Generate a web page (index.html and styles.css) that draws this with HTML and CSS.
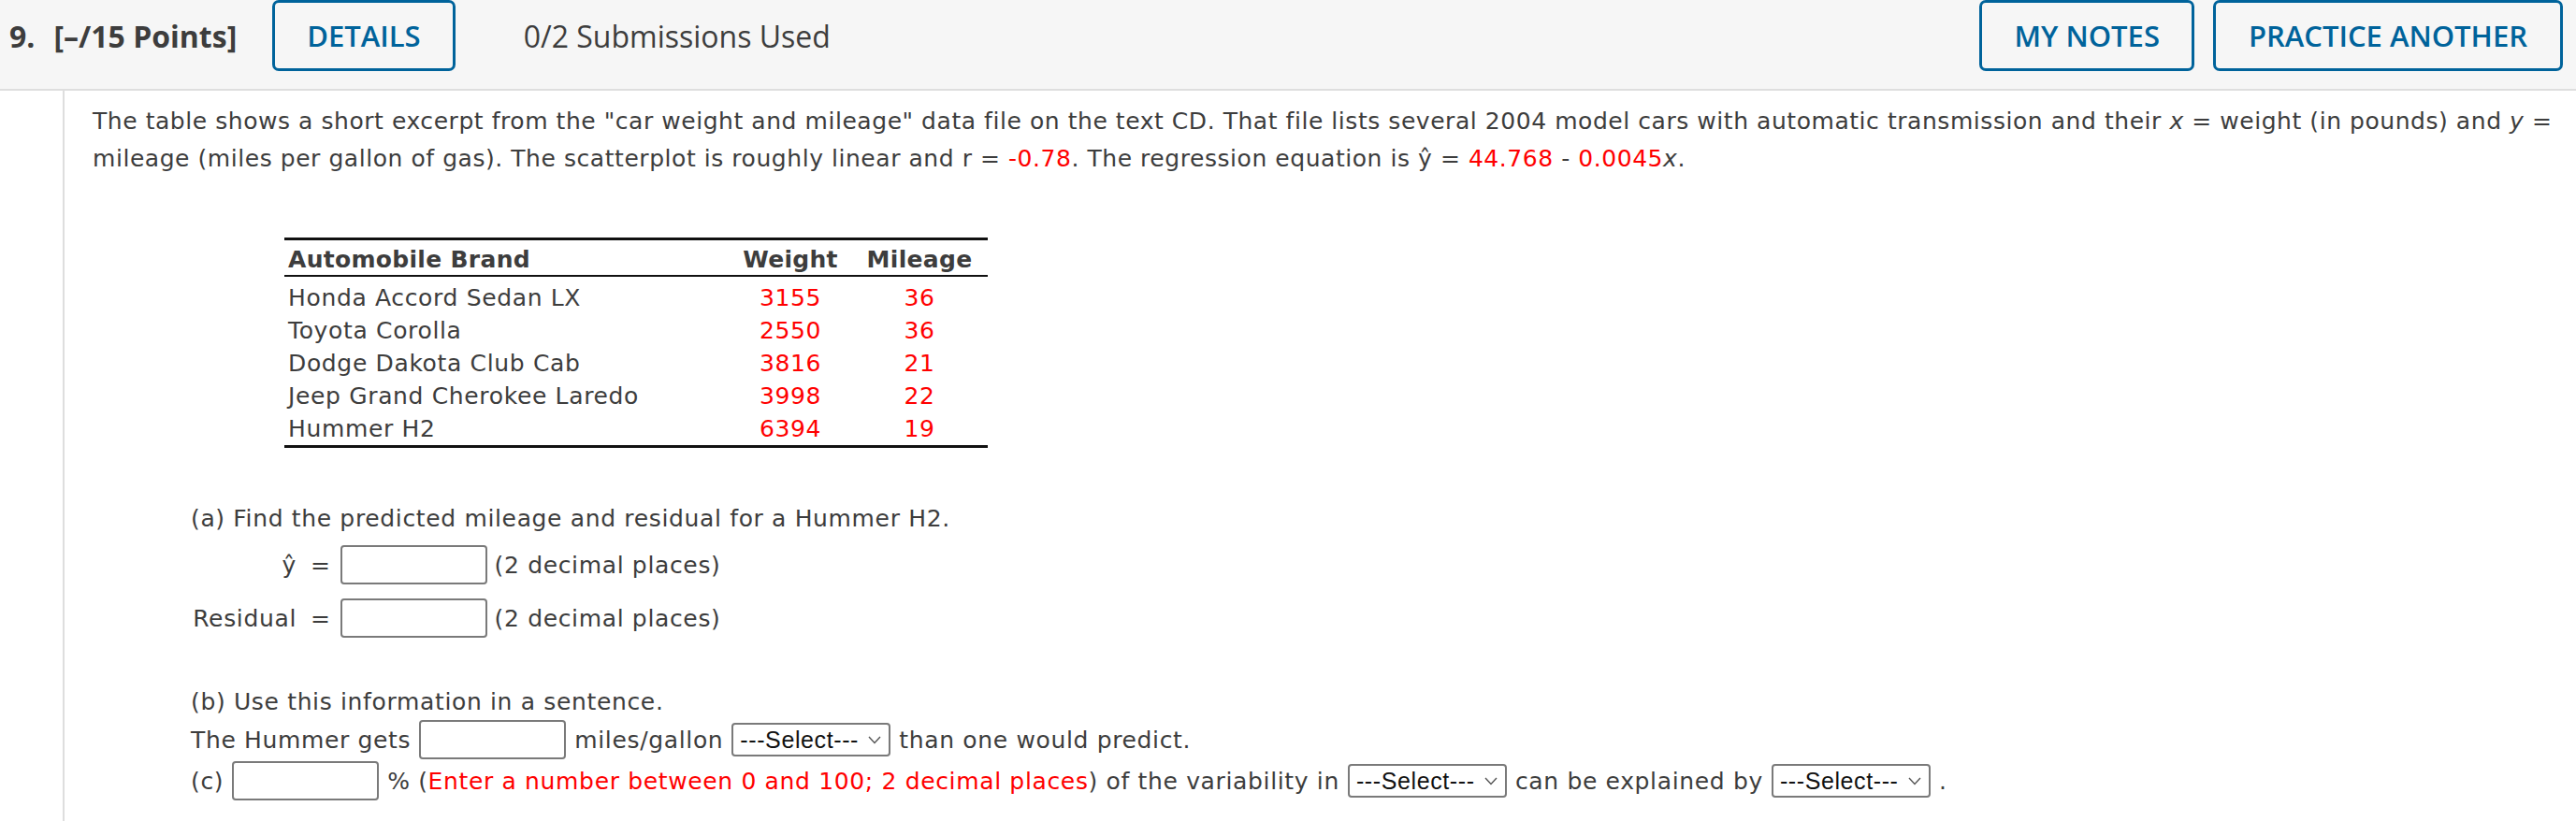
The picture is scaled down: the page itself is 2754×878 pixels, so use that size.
FILE: index.html
```html
<!DOCTYPE html>
<html lang="en">
<head>
<meta charset="utf-8">
<title>Question 9</title>
<link rel="stylesheet" href="styles.css">
</head>
<body>
<div class="header">
  <span class="qnum">9.</span>
  <span class="points">[&ndash;/15 Points]</span>
  <button class="btn btn-details">DETAILS</button>
  <span class="subs">0/2 Submissions Used</span>
  <span class="spacer"></span>
  <button class="btn">MY NOTES</button>
  <button class="btn btn-practice">PRACTICE ANOTHER</button>
</div>
<div class="content">
  <p class="intro">The table shows a short excerpt from the "car weight and mileage" data file on the text CD. That file lists several 2004 model cars with automatic transmission and their <i>x</i> = weight (in pounds) and <i>y</i> = mileage (miles per gallon of gas). The scatterplot is roughly linear and r = <span class="red">-0.78</span>. The regression equation is ŷ = <span class="red">44.768</span> - <span class="red">0.0045</span><i>x</i>.</p>

  <table class="cars">
    <colgroup>
      <col class="c-brand">
      <col class="c-w">
      <col class="c-m">
    </colgroup>
    <thead>
      <tr><th>Automobile Brand</th><th class="ctr">Weight</th><th class="ctr">Mileage</th></tr>
    </thead>
    <tbody>
      <tr><td>Honda Accord Sedan LX</td><td class="num">3155</td><td class="num">36</td></tr>
      <tr><td>Toyota Corolla</td><td class="num">2550</td><td class="num">36</td></tr>
      <tr><td>Dodge Dakota Club Cab</td><td class="num">3816</td><td class="num">21</td></tr>
      <tr><td>Jeep Grand Cherokee Laredo</td><td class="num">3998</td><td class="num">22</td></tr>
      <tr><td>Hummer H2</td><td class="num">6394</td><td class="num">19</td></tr>
    </tbody>
  </table>

  <div class="part part-a">
    <div class="part-title">(a) Find the predicted mileage and residual for a Hummer H2.</div>
    <div class="ans-grid">
      <span class="lbl">ŷ</span><span class="eq">=</span><input class="ans" type="text"><span class="hint">(2 decimal places)</span>
      <span class="lbl">Residual</span><span class="eq">=</span><input class="ans" type="text"><span class="hint">(2 decimal places)</span>
    </div>
  </div>

  <div class="part part-b">
    <div class="part-title part-title-b">(b) Use this information in a sentence.</div>
    <div class="ans-row">
      <span>The Hummer gets</span>
      <input class="ans" type="text">
      <span>miles/gallon</span>
      <span class="select"><span>---Select---</span><svg class="chev" width="14" height="9" viewBox="0 0 14 9"><polyline points="1,1 7,7.5 13,1" fill="none" stroke="#555" stroke-width="1.4"/></svg></span>
      <span>than one would predict.</span>
    </div>
    <div class="ans-row ans-row-c">
      <span>(c)</span>
      <input class="ans" type="text">
      <span>% (<span class="red">Enter a number between 0 and 100; 2 decimal places</span>) of the variability in</span>
      <span class="select"><span>---Select---</span><svg class="chev" width="14" height="9" viewBox="0 0 14 9"><polyline points="1,1 7,7.5 13,1" fill="none" stroke="#555" stroke-width="1.4"/></svg></span>
      <span>can be explained by</span>
      <span class="select"><span>---Select---</span><svg class="chev" width="14" height="9" viewBox="0 0 14 9"><polyline points="1,1 7,7.5 13,1" fill="none" stroke="#555" stroke-width="1.4"/></svg></span>
      <span>.</span>
    </div>
  </div>
</div>
</body>
</html>
```

FILE: styles.css
```css
html, body {
  margin: 0;
  padding: 0;
}

body {
  font-family: "DejaVu Sans", Verdana, sans-serif;
  font-size: 25px;
  color: #3d3d3d;
  background: #ffffff;
}

.red {
  color: #ff0000;
}

/* ---------- header ---------- */
.header {
  display: flex;
  align-items: center;
  height: 76px;
  padding: 0 14px 19px 10px;
  background: #f6f6f6;
  border-bottom: 2px solid #dedede;
  font-family: "Open Sans", sans-serif;
  font-size: 32px;
  color: #3d3d3d;
  white-space: nowrap;
}

.qnum,
.points {
  font-weight: 700;
}

.qnum {
  margin-right: 20px;
}

.btn {
  height: 76px;
  box-sizing: border-box;
  border: 3px solid #00639b;
  border-radius: 7px;
  background: transparent;
  color: #00639b;
  font-family: "Open Sans", sans-serif;
  font-weight: 600;
  font-size: 31px;
  padding: 0 34px;
  margin: 0;
}

.btn-details {
  margin-left: 38px;
}

.btn-practice {
  padding: 0 35px;
}

.subs {
  margin-left: 73px;
}

.spacer {
  flex: 1;
}

.btn + .btn {
  margin-left: 20px;
}

/* ---------- content ---------- */
.content {
  margin-left: 67px;
  border-left: 2px solid #dedede;
  padding: 13px 0 0 30px;
  min-height: 781px;
  box-sizing: border-box;
  letter-spacing: 0.65px;
}

.intro {
  margin: 0;
  line-height: 40px;
  letter-spacing: 0.55px;
}

/* ---------- table ---------- */
.cars {
  margin: 64px 0 0 205px;
  width: 752px;
  table-layout: fixed;
  border-collapse: collapse;
  border-top: 3px solid #111;
  border-bottom: 3px solid #111;
}

.c-brand { width: 476px; }
.c-w { width: 130px; }
.c-m { width: 146px; }

.cars th {
  text-align: left;
  font-weight: 700;
  padding: 5px 4px 0 4px;
  line-height: 32px;
  border-bottom: 2px solid #111;
  letter-spacing: 0.3px;
}

.cars th.ctr {
  text-align: center;
}

.cars td {
  padding: 0 4px;
  line-height: 35px;
}

.cars tbody tr:first-child td {
  padding-top: 5px;
}

.cars .num {
  text-align: center;
  color: #ff0000;
}

/* ---------- parts ---------- */
.part {
  margin-left: 105px;
}

.part-a {
  margin-top: 56px;
}

.part-b {
  margin-top: 50px;
}

.part-title {
  line-height: 40px;
}

.part-title-b {
  line-height: 38px;
}

.ans-grid {
  display: grid;
  grid-template-columns: 113px auto auto auto;
  justify-content: start;
  align-items: center;
  row-gap: 15px;
  margin-top: 8px;
}

.lbl {
  justify-self: end;
}

.eq {
  margin: 0 10px 0 15px;
}

.ans {
  width: 157px;
  height: 42px;
  box-sizing: border-box;
  margin: 0;
  padding: 0 6px;
  border: 2px solid #7a7a7a;
  border-radius: 4px;
  background: #fff;
  font: inherit;
}

.hint {
  margin-left: 8px;
}

.ans-row {
  display: flex;
  align-items: center;
  gap: 9px;
  height: 42px;
  white-space: nowrap;
}

.ans-row-c {
  margin-top: 2px;
}

.select {
  display: inline-flex;
  align-items: center;
  justify-content: space-between;
  width: 170px;
  height: 36px;
  box-sizing: border-box;
  padding: 0 8px 0 7px;
  border: 2px solid #7a7a7a;
  border-radius: 4px;
  background: #fff;
  font-family: "Liberation Sans", Arial, sans-serif;
  font-size: 25px;
  letter-spacing: 0.6px;
  color: #111;
}

.chev {
  display: block;
  flex: none;
}
```
